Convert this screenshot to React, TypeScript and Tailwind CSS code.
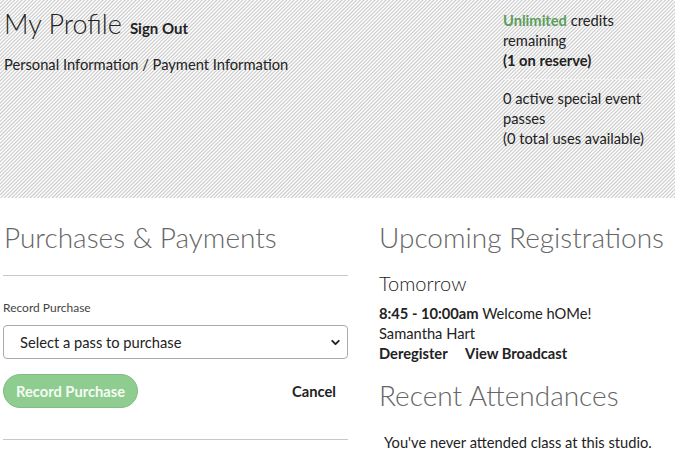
import { ChevronDown } from 'lucide-react';

export default function App() {
  return (
    <div className="w-[675px] h-[458px] overflow-hidden bg-white text-[#222] font-['Lato',sans-serif]">
      <div className="h-[198px] flex justify-between bg-[repeating-linear-gradient(135deg,#c8c8c8_0px,#ffffff_1.2px,#ffffff_1.6px,#c8c8c8_2.6px)]">
        <div className="pl-1 pt-[7px]">
          <div className="flex items-baseline gap-2 leading-[34px]">
            <h1 className="text-[27px] font-light text-[#222]">My Profile</h1>
            <span className="text-[15px] font-bold">Sign Out</span>
          </div>
          <p className="mt-[9px] text-[14.7px] leading-[20px]">Personal Information / Payment Information</p>
        </div>
        <div className="w-[150px] mr-[22px] pt-[10px] text-[14.7px] leading-[20px]">
          <p>
            <span className="font-bold text-[#5a9e5a]">Unlimited</span> credits remaining
          </p>
          <p className="font-bold">(1 on reserve)</p>
          <div className="mt-[9px] mb-[8px] h-px bg-[#f2f2f2]" />
          <p className="w-[142px]">0 active special event passes</p>
          <p>(0 total uses available)</p>
        </div>
      </div>

      <div className="flex">
        <div className="w-[348px] pl-[3px]">
          <h2 className="mt-[18px] pl-[1px] text-[28px] leading-[42px] font-light text-[#666]">Purchases &amp; Payments</h2>
          <div className="mt-[17px] h-px bg-[#c8c8c8]" />
          <p className="mt-[23px] text-[12px] leading-[18px] text-[#444]">Record Purchase</p>
          <div className="mt-[8px] h-[34px] border border-[#aaa] rounded-[4px] flex items-center justify-between pl-[16px] pr-[5px]">
            <span className="text-[14.7px] text-[#222]">Select a pass to purchase</span>
            <ChevronDown size={13} strokeWidth={3.5} className="text-[#222]" />
          </div>
          <div className="mt-[15px] flex items-center justify-between pr-[12px]">
            <button className="h-[34px] px-[12px] rounded-full bg-[#8fcc8f] border border-[#7fbf7f] text-[#f4fbf4] text-[14.7px] font-bold">
              Record Purchase
            </button>
            <span className="text-[14.7px] font-bold">Cancel</span>
          </div>
          <div className="mt-[31px] h-px bg-[#c8c8c8]" />
        </div>

        <div className="ml-[31px] flex-1">
          <h2 className="mt-[18px] text-[28px] leading-[42px] font-light text-[#666]">Upcoming Registrations</h2>
          <p className="mt-[12px] text-[20px] leading-[27px] font-light text-[#222]">Tomorrow</p>
          <div className="mt-[6px] text-[14.7px] leading-[20px]">
            <p>
              <span className="font-bold">8:45 - 10:00am</span> Welcome hOMe!
            </p>
            <p>Samantha Hart</p>
            <p className="font-bold">
              Deregister <span className="ml-[14px]">View Broadcast</span>
            </p>
          </div>
          <h2 className="mt-[11px] text-[28px] leading-[42px] font-light text-[#666]">Recent Attendances</h2>
          <p className="mt-[15px] ml-[5px] text-[14.7px] leading-[22px]">You've never attended class at this studio.</p>
        </div>
      </div>
    </div>
  );
}
